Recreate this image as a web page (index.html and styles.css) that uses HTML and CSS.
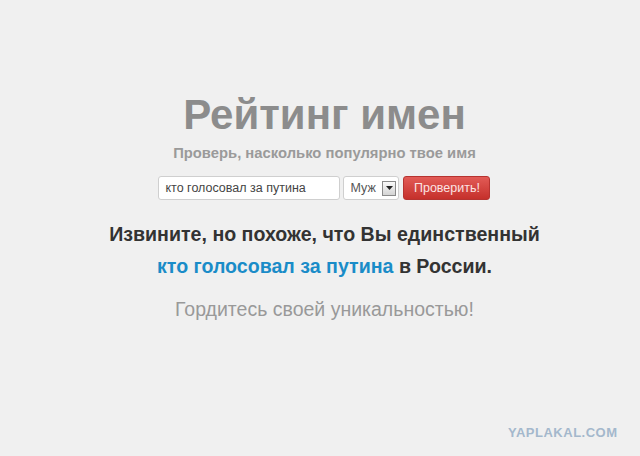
FILE: index.html
```html
<!DOCTYPE html>
<html lang="ru">
<head>
    <meta charset="UTF-8">
    <title>Рейтинг имен</title>
    <link rel="stylesheet" href="styles.css">
</head>
<body>
    <div class="container">
        <h1>Рейтинг имен</h1>
        <p class="lead">Проверь, насколько популярно твое имя</p>
        <form class="search">
            <input type="text" name="name" value="кто голосовал за путина">
            <div class="gender">
                <span>Муж</span>
                <span class="arrow"><svg width="7" height="4" viewBox="0 0 7 4"><path d="M0 0h7L3.5 4z" fill="#222"/></svg></span>
            </div>
            <button type="button">Проверить!</button>
        </form>
        <p class="result">Извините, но похоже, что Вы единственный<br><span class="name">кто голосовал за путина</span> в России.</p>
        <p class="proud">Гордитесь своей уникальностью!</p>
    </div>
    <div class="mark">YAPLAKAL.COM</div>
</body>
</html>
```

FILE: styles.css
```css
body {
    margin: 0;
    padding-left: 9px;
    height: 456px;
    background-color: #f0f0f0;
    font-family: 'Liberation Sans', Arial, sans-serif;
    display: flex;
    flex-direction: column;
    align-items: center;
}

.container {
    padding-top: 89px;
    display: flex;
    flex-direction: column;
    align-items: center;
}

.container h1 {
    margin: 0;
    font-size: 42px;
    line-height: 52px;
    color: #8c8c8c;
}

.lead {
    margin: 4px 0 0;
    font-size: 14.8px;
    font-weight: bold;
    color: #9a9a9a;
}

.search {
    display: flex;
    gap: 3px;
    margin-top: 15px;
}

.search input {
    width: 168px;
    height: 22px;
    padding: 0 6px;
    border: 1px solid #cfcfcf;
    border-radius: 3px;
    font-family: inherit;
    font-size: 12.5px;
    color: #444;
    background: #fff;
}

.gender {
    width: 46px;
    height: 22px;
    border: 1px solid #cfcfcf;
    border-radius: 3px;
    background: #fff;
    display: flex;
    align-items: center;
    justify-content: space-between;
    padding: 0 2px 0 6px;
    font-size: 12.5px;
    color: #555;
}

.arrow {
    width: 12px;
    height: 13px;
    border: 1px solid #8a8a8a;
    background: linear-gradient(#fafafa, #d4d4d4);
    display: flex;
    align-items: center;
    justify-content: center;
}

.search button {
    width: 87px;
    height: 24px;
    margin-left: 1px;
    border: 1px solid #b63330;
    border-radius: 3px;
    background: linear-gradient(#e25b56, #c5302b);
    color: #fbe3e3;
    font-family: inherit;
    font-size: 12.5px;
}

.result {
    margin: 18px 0 0;
    text-align: center;
    font-size: 19.6px;
    font-weight: bold;
    line-height: 32px;
    color: #333;
}

.result .name {
    color: #1a8cc8;
}

.proud {
    margin: 16px 0 0;
    font-size: 19.5px;
    line-height: 22px;
    color: #999;
}

.mark {
    position: absolute;
    left: 508px;
    top: 425px;
    font-size: 13px;
    font-weight: bold;
    color: #a4b8cc;
    letter-spacing: 0.5px;
}
```
